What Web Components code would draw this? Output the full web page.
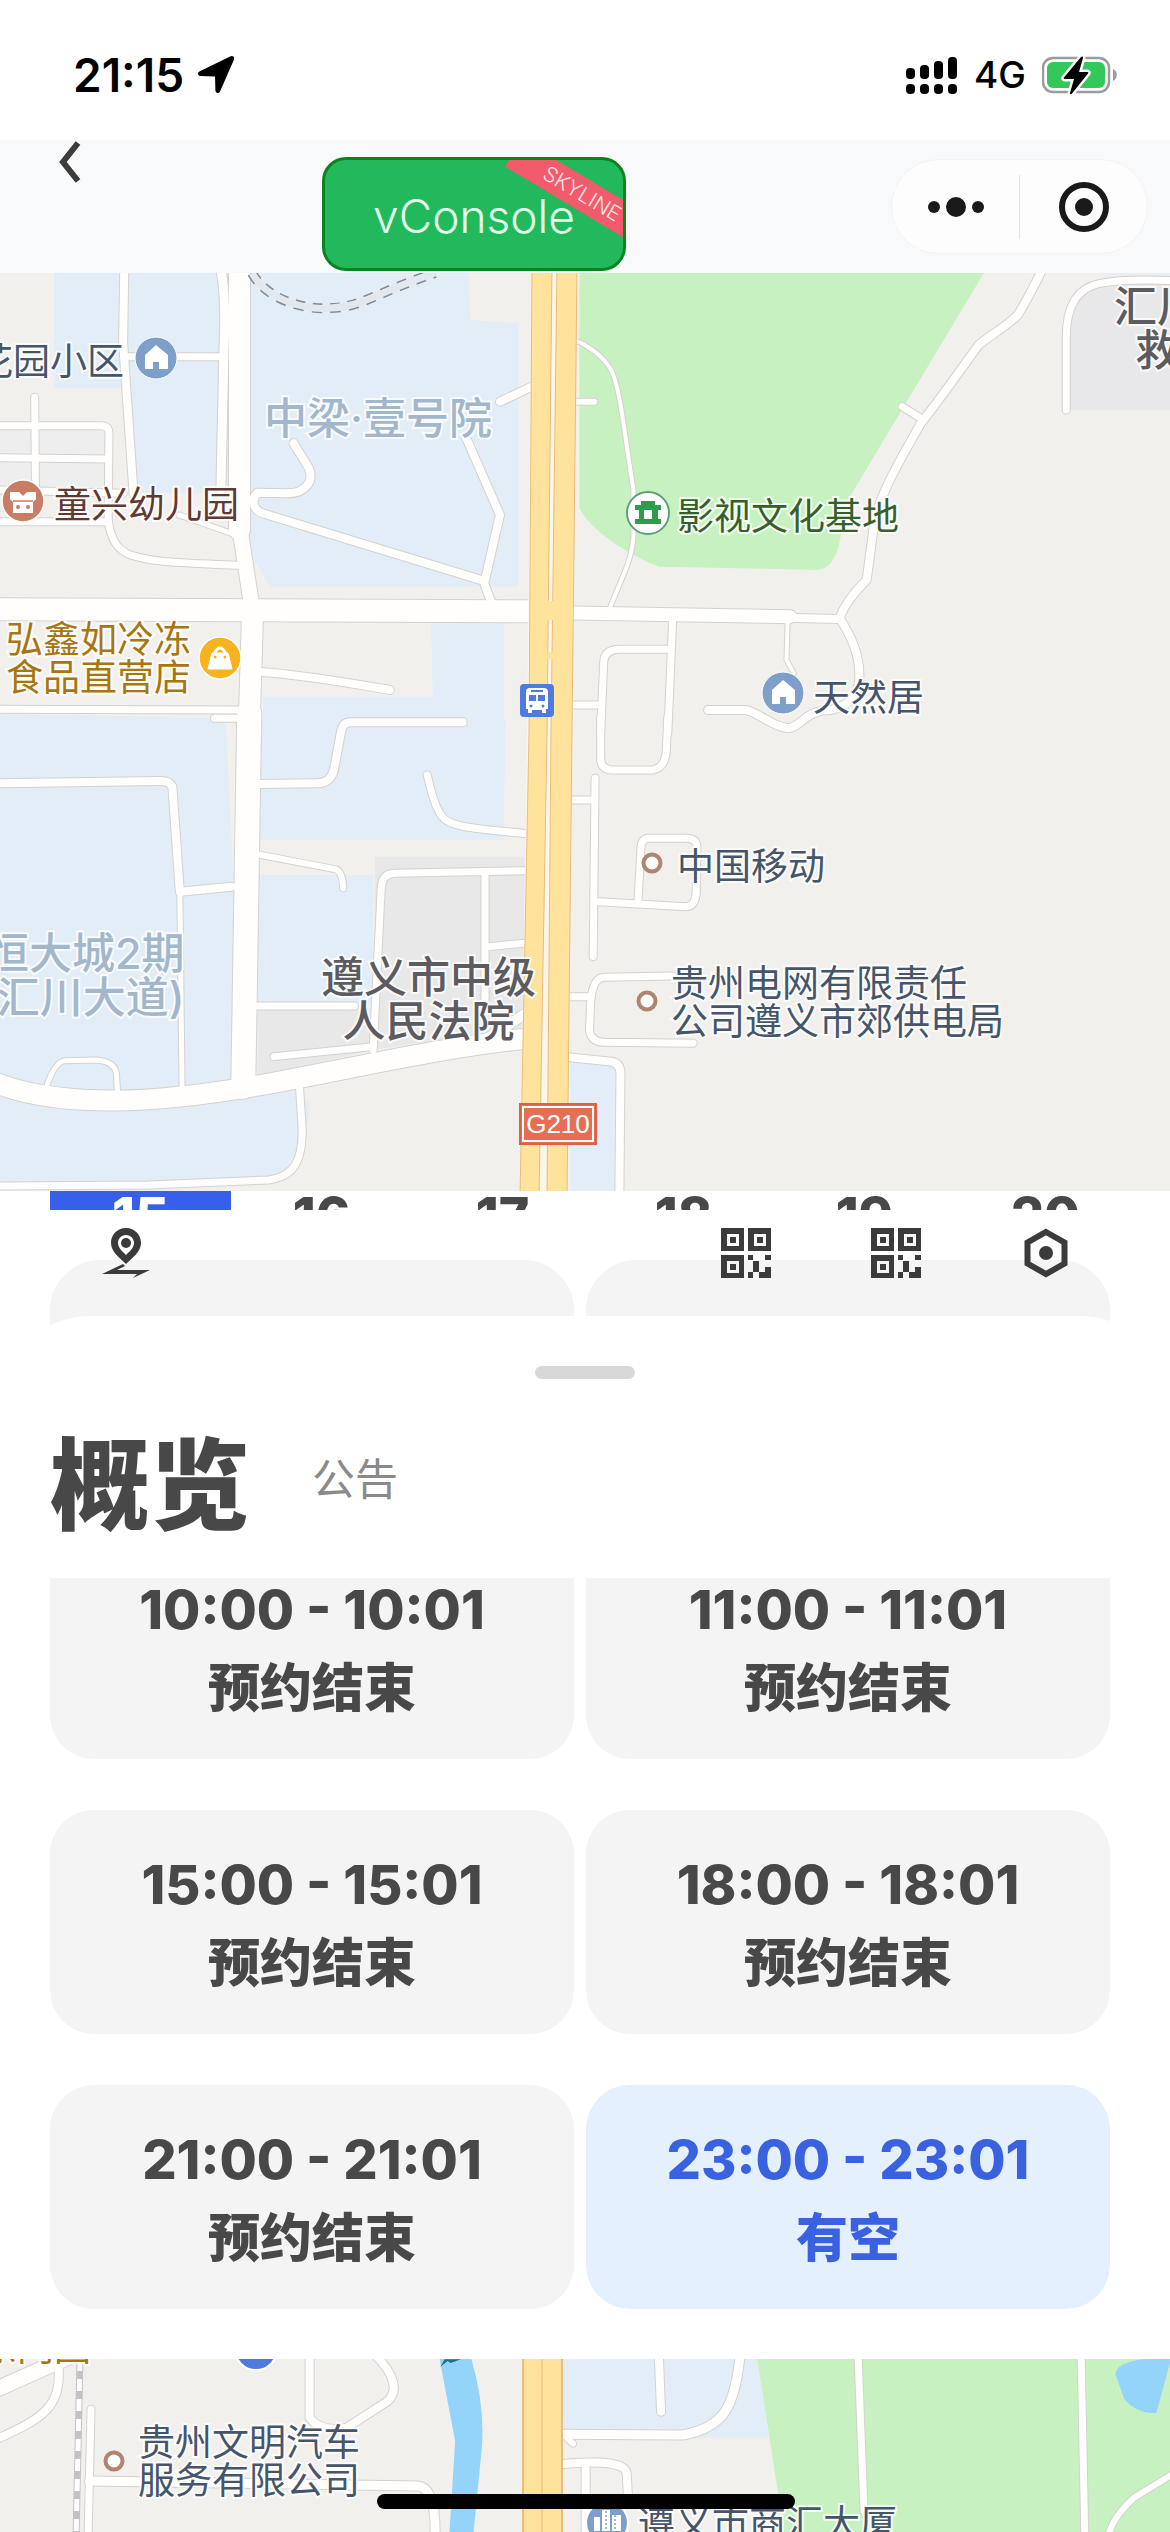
<!DOCTYPE html>
<html lang="zh-CN">
<head>
<meta charset="utf-8">
<meta name="viewport" content="width=device-width, initial-scale=1">
<title>概览</title>
<style>
html, body { margin: 0; background: #fff; }
body { font-family: Inter, "Noto Sans CJK SC", sans-serif; color: #484848; }
booking-page { min-height: 100vh; }
</style>
</head>
<body>
<booking-page>
  <status-bar slot="top" time="21:15" network="4G"></status-bar>
  <nav-bar slot="top"></nav-bar>
  <area-map slot="map" region="north">
    <map-label x="-24" y="89">花园小区</map-label>
    <map-label x="264" y="145" size="large" tone="estate">中梁·壹号院</map-label>
    <map-label x="54" y="232" tone="school">童兴幼儿园</map-label>
    <map-label x="6" y="386" tone="shop">弘鑫如冷冻<br>食品直营店</map-label>
    <map-label x="677" y="244" tone="park">影视文化基地</map-label>
    <map-label x="813" y="425">天然居</map-label>
    <map-label x="1114" y="55" size="large" tone="civic" align="center">汇川<br>救</map-label>
    <map-label x="-14" y="702" size="large" tone="estate" align="right">恒大城2期<br>汇川大道)</map-label>
    <map-label x="321" y="726" size="large" tone="civic" align="center">遵义市中级<br>人民法院</map-label>
    <map-label x="677" y="594">中国移动</map-label>
    <map-label x="671" y="730">贵州电网有限责任<br>公司遵义市郊供电局</map-label>
    <map-label x="519" y="851" tone="route">G210</map-label>
  </area-map>
  <date-strip slot="sheet" days="15,16,17,18,19,20" selected="15"></date-strip>
  <tool-row slot="sheet"></tool-row>
  <overview-panel slot="sheet" heading="概览" link="公告">
    <time-slot time="10:00 - 10:01">预约结束</time-slot>
    <time-slot time="11:00 - 11:01">预约结束</time-slot>
    <time-slot time="15:00 - 15:01">预约结束</time-slot>
    <time-slot time="18:00 - 18:01">预约结束</time-slot>
    <time-slot time="21:00 - 21:01">预约结束</time-slot>
    <time-slot time="23:00 - 23:01" open>有空</time-slot>
  </overview-panel>
  <area-map slot="bottom" region="south">
    <map-label x="-20" y="-11" tone="shop">东门园</map-label>
    <map-label x="138" y="103">贵州文明汽车<br>服务有限公司</map-label>
    <map-label x="638" y="165">遵义市商汇大厦</map-label>
  </area-map>
</booking-page>

<script>
const define = (name, css, html, setup) => {
  const template = document.createElement('template');
  template.innerHTML = `<style>:host,*{box-sizing:border-box}button,a{font:inherit;color:inherit;border:0;background:none;padding:0;margin:0;text-decoration:none}svg{display:block}${css}</style>${typeof html === 'string' ? html : ''}`;
  customElements.define(name, class extends HTMLElement {
    connectedCallback() {
      if (this.shadowRoot) return;
      const root = this.attachShadow({ mode: 'open' });
      root.append(template.content.cloneNode(true));
      if (typeof html === 'function') root.querySelector('style').insertAdjacentHTML('afterend', html(this));
      if (setup) setup(this, root);
    }
  });
};

define('booking-page', `
  :host { display: flex; flex-direction: column; position: relative; overflow: hidden; }
  .bottom { flex: 1; overflow: hidden; min-height: 174px; }
  .home { position: absolute; left: 50%; bottom: 24px; width: 418px; height: 15px; margin-left: -208px; border-radius: 8px; background: #000; }
`, `<slot name="top"></slot><slot name="map"></slot><slot name="sheet"></slot><div class="bottom"><slot name="bottom"></slot></div><div class="home"></div>`);

define('status-bar', `
  :host { display: flex; justify-content: space-between; height: 140px; padding: 50px 52px 40px 73px; color: #000; background: #fff; }
  .side { display: flex; align-items: center; height: 50px; }
  .left { gap: 12px; } .right { gap: 16px; }
  .time { font-size: 46px; font-weight: 600; line-height: 50px; }
  .net { font-size: 37px; font-weight: 500; line-height: 50px; }
`, el => `
  <div class="side left"><span class="time">${el.getAttribute('time')}</span>
    <svg width="38" height="38" viewBox="0 0 38 38"><path d="M36.500 1.200c.9.400.9 1.300.5 2.200L23.200 34.800c-.8 1.900-2.700 1.600-2.800-.3L20 19.500 4.600 19c-2-.1-2.300-2-.4-2.800L34.600 1.300c.7-.3 1.300-.4 1.900-.1z" stroke="#000" stroke-width="2"/></svg></div>
  <div class="side right">
    <svg width="52" height="38" viewBox="0 0 52 38"><g><rect y="12" width="9" height="11" rx="4"/><rect x="14" y="9" width="9" height="14" rx="4"/><rect x="28" y="5" width="9" height="18" rx="4"/><rect x="42" y="1" width="9" height="22" rx="4"/><rect y="28" width="9" height="10" rx="4"/><rect x="14" y="28" width="9" height="10" rx="4"/><rect x="28" y="28" width="9" height="10" rx="4"/><rect x="42" y="28" width="9" height="10" rx="4"/></g></svg>
    <span class="net">${el.getAttribute('network')}</span>
    <svg width="76" height="38" viewBox="0 0 76 38"><rect x="1" y="2" width="66" height="34" rx="10" fill="#fff" stroke="#9b9b9b" stroke-width="2.500"/><rect x="5" y="6" width="58" height="26" rx="6" fill="#34c759"/><path d="M71 13c5 2 5 10 0 12z" fill="#9b9b9b"/><path d="M39 1 22 21.500c-.6.8-.2 1.500.8 1.500H32l-4 14c-.3 1.500 1 1.500 2 .5L46 17.500c.7-.9.300-1.500-.8-1.500H37l4-14c.300-1.500-1-2-2-1z" stroke="#fff" stroke-width="5" paint-order="stroke"/></svg>
  </div>`);

define('nav-bar', `
  :host { display: grid; grid-template-columns: 322px 304px 1fr 257px; height: 133px; padding: 0 22px 0 0; background: #f8f9fb; }
  .back { justify-self: start; align-self: start; margin: 0 0 0 56px; width: 48px; height: 44px; }
  .console { position: relative; overflow: hidden; width: 304px; height: 114px; margin-top: 17px; padding-top: 4px; border: 3px solid #0b8420; border-radius: 24px; background: #22b95c; color: #e2ffec; font-size: 46px; line-height: 50px; font-weight: 300; }
  .ribbon { position: absolute; left: 177px; top: 18px; width: 160px; height: 32px; font-size: 21px; line-height: 32px; background: #f15b6c; color: #ffe3e6; transform: rotate(31deg); }
  .capsule { grid-column: 4; display: flex; align-items: center; height: 95px; margin-top: 19px; border: 1px solid #f2f3f5; border-radius: 48px; background: #fdfdfe; }
  .capsule button { flex: 1; display: flex; justify-content: center; align-items: center; height: 64px; }
  .capsule button + button { border-left: 1px solid #e2e3e5; }
`, `
  <button class="back" aria-label="返回"><svg width="48" height="44" viewBox="0 0 48 44"><path d="M22 3 7 22l15 19" fill="none" stroke="#3c3c3c" stroke-width="6"/></svg></button>
  <button class="console">vConsole<span class="ribbon">SKYLINE</span></button>
  <div class="capsule">
    <button aria-label="更多"><svg width="56" height="20" viewBox="0 0 56 20"><circle cx="6" cy="10" r="6" fill="#1a1a1c"/><circle cx="28" cy="10" r="10" fill="#1a1a1c"/><circle cx="50" cy="10" r="6" fill="#1a1a1c"/></svg></button>
    <button aria-label="关闭"><svg width="52" height="52" viewBox="0 0 52 52"><circle cx="26" cy="26" r="22" fill="none" stroke="#1a1a1c" stroke-width="6"/><circle cx="26" cy="26" r="9" fill="#1a1a1c"/></svg></button>
  </div>`);

/* Roads are grouped by survey tile; each tile has its own origin and scale. [width, path] */
const REGIONS = {
  north: {
    width: 1170, height: 918,
    tiles: { a: 'translate(0 -13) scale(.3731 .3333)', b: 'translate(585 -13) scale(.3731 .3333)', c: 'translate(0 447) scale(.3731 .3333)', d: 'translate(585 447) scale(.3731 .3333)' },
    areas: {
      a: [['#e2edf7', 'M145 0H1255L1260 180 1390 190V980H725L670 880V700H350L330 385H145z'], ['#e2edf7', 'M1155 1090H1350V1440H705V1310H1160z'], ['#e2edf7', 'M0 1362 600 1375V1410H0z'], ['#ecebf0', 'M0 500 290 500V700H0z', .35]],
      b: [['#c8f1c2', 'M-15 0H1090L710 710 685 830Q670 930 620 930L200 920C120 890 0 800-15 740z'], ['#e8e8ea', 'M1290 180Q1290 60 1400 60L1568 60V450H1290z'], ['#ededee', 'M1390 0H1568V60H1390z']],
      c: [['#e2edf7', 'M0 0H605L625 460V1120Q480 1140 300 1130 120 1130 0 1080z'], ['#e2edf7', 'M695 0H1355L1350 360H695z'], ['#e2edf7', 'M690 465H1000V850H690z'], ['#e2edf7', 'M0 1120Q320 1200 800 1100L830 1150Q820 1340 740 1380L400 1395 0 1400z'], ['#e8e8e9', 'M1005 410H1410L1400 920 1000 990z'], ['#e8e8e9', 'M690 865H1000V990L690 1070z']],
      d: [['#e2edf7', 'M-40 1010 95 1030 92 1440H-40z']]
    },
    roads: {
      a: [[8, 'M333 30 330 250 358 700'], [9, 'M592 30C606 100 603 200 600 280L592 690'], [7, 'M345 290H600'], [7, 'M93 412 95 680M0 497H270Q292 497 292 520L290 780C295 830 310 870 350 885 420 910 500 908 635 916'], [7, 'M0 593 290 597M0 690 330 700M0 785H290'], [5, 'M480 765 620 820'], [8, 'M787 550 820 610C850 660 820 700 770 700L690 698C670 720 680 755 710 762L1295 962 1318 1030'], [8, 'M1435 375 1340 425M1248 530 1340 765 1300 960'], [8, 'M690 1235C820 1245 940 1270 1045 1290'], [7, 'M0 1348 650 1350M575 1375H650'], [15, 'M642 800 675 1040'], [21, 'M642 20 642 810'], [22, 'M-20 1048 1440 1054'], [21, 'M677 1060 667 1420']],
      b: [[6, 'M-45 425H25'], [4, 'M-60 235C0 240 50 290 70 330 95 380 110 560 130 690V830Q125 890 105 940L68 1040'], [8, 'M1225 30Q1190 110 1160 165C1130 200 1080 230 1055 255 1000 340 950 420 900 490 850 590 790 700 775 790L755 960Q700 1020 682 1075 740 1170 735 1260 730 1330 660 1350C590 1350 580 1400 545 1405 500 1400 470 1360 430 1350H330'], [7, 'M850 440 900 475'], [7, 'M1290 450V230Q1290 90 1380 70 1450 55 1580 62'], [7, 'M235 1080 222 1420M222 1168H90Q50 1170 50 1210L42 1420M-60 1335H40'], [4, 'M543 1085 540 1200 560 1240'], [8, 'M540 1073 680 1077'], [13, 'M-70 1058 550 1070']],
      c: [[8, 'M1240 7H940Q920 7 915 30L895 150Q885 190 850 190L690 192'], [8, 'M0 190 430 183Q455 183 462 200L482 515 620 500'], [5, 'M482 515 488 1110'], [6, 'M690 403 900 448Q918 455 920 505'], [7, 'M1145 165C1155 210 1165 260 1185 290 1205 320 1260 325 1420 342'], [7, 'M1000 990 1022 500Q1025 460 1060 460L1420 452M1300 460V850M1310 680 1420 668'], [7, 'M680 858H950M735 1010 1000 980'], [5, 'M122 1110Q145 1025 175 1022L250 1020Q305 1020 312 1060L315 1115'], [7, 'M803 1105 810 1230C810 1320 790 1370 720 1380L400 1395 0 1398'], [10, 'M1300 960 1410 880'], [24, 'M668-20 652 1100'], [20, 'M-20 1085C120 1150 320 1150 480 1130 760 1100 1100 990 1420 955']],
      d: [[7, 'M42-10V120Q45 150 75 150H180Q215 145 218 90L222-10'], [7, 'M27 175 22 710M-50 240H20'], [7, 'M35 545 270 560Q295 560 298 520L300 380Q300 355 270 355H170Q150 358 150 385L142 545'], [7, 'M235 768 50 772Q20 775 15 850L12 930Q15 965 50 967L290 970M-60 830H15'], [8, 'M-60 1010 70 1025Q95 1030 95 1060L92 1440']]
    },
    overlay: `
      <path d="M252 0C269 30 310 37 330 35 360 35 375 20 435 0" fill="none" stroke="#838a94" stroke-width="10" stroke-dasharray="10 8"/>
      <path d="M252 0C269 30 310 37 330 35 360 35 375 20 435 0" fill="none" stroke="#e3e8ee" stroke-width="7"/>
      <path d="M532-5 577-5 572 460 567 925 520 925 527 460z" fill="#fbf6ea"/>
      <path d="M532-5 529 460 520 925 539 925 547 460 552-5z M557-5 551 460 547 925 567 925 572 460 577-5z" fill="#ffe39d" stroke="#e9bb7c" stroke-width="1"/>
      <path d="M531 328H573V347H531z" fill="#ffe39d"/><path d="M548 379H554V386H547z" fill="#ffe39d"/>
      <use href="#house" x="135" y="64"/><use href="#house" x="762" y="399"/>
      <circle cx="23" cy="228" r="21" fill="#c97d64" stroke="#fff" stroke-width="1.500"/><path d="M10 219h9l4 4 4-4h9v7l-3 3v11H13v-11l-3-3z" fill="#fff"/><path d="M13 228h20" stroke="#c97d64" stroke-width="1.500"/><circle cx="18" cy="234" r="2" fill="#c97d64"/><circle cx="28" cy="234" r="2" fill="#c97d64"/>
      <circle cx="220" cy="385" r="21" fill="#f6b31f" stroke="#fff" stroke-width="1.500"/><path d="M212 380h16l4 16h-24z" fill="#fff" stroke="#fff" stroke-linejoin="round"/><path d="M215 381v-2q5-8 10 0v2" fill="none" stroke="#fff" stroke-width="3"/><circle cx="215" cy="384" r="1.500" fill="#f6b31f"/><circle cx="225" cy="384" r="1.500" fill="#f6b31f"/>
      <rect x="520" y="411" width="34" height="33" rx="4" fill="#4d7be0"/><path d="M526 419q0-4 4-4h14q4 0 4 4v17h-2v4h-4v-3h-10v3h-4v-4h-2zM529 422v6h7v-6zM538 422v6h7v-6zM531 417v2h12v-2z" fill="#fff" fill-rule="evenodd"/><circle cx="531" cy="433" r="1.500" fill="#4d7be0"/><circle cx="543" cy="433" r="1.500" fill="#4d7be0"/>
      <circle cx="648" cy="240" r="21" fill="#fff" stroke="#5f9f78" stroke-width="2"/><path d="M641 228h14v4h6v5h-3v9h3v5h-26v-5h4v-9h-4v-5h6zM644 237v9h8v-9z" fill="#2f9c4c" fill-rule="evenodd"/>
      <use href="#ring" x="652" y="590"/><use href="#ring" x="647" y="728"/>`
  },
  south: {
    width: 1170, height: 174,
    tiles: { e: 'translate(0 -18) scale(.7461 .3333)' },
    areas: { e: [['#94d4fb', 'M588 40 630 40Q652 200 645 340L634 590H602L610 300z'], ['#e2edf7', 'M755 40H1018L1030 290H755z'], ['#c8f1c2', 'M1014 40H1580V590H1052z'], ['#94d4fb', 'M1495 100Q1496 50 1570 50L1550 215Q1525 222 1507 175z'], ['#1f6f8c', 'M590 78 596 55H618L604 66 600 60z']] },
    roads: { e: [[8, 'M78 60C84 200 60 230-10 300'], [7, 'M122 205 118 590'], [9, 'M120 420 560 435Q585 440 583 590'], [8, 'M415 40V230Q430 275 465 260L520 180Q542 130 502 40'], [8, 'M883 40 886 212'], [9, 'M750 280 915 282C970 260 985 200 992 40'], [8, 'M750 370Q840 350 840 400L842 480M785 370V590'], [6, 'M755 280 768 308'], [7, 'M1150 40 1158 510'], [7, 'M1449 40 1454 590'], [6, 'M1575 395 1520 470Q1490 530 1485 590'], [15, 'M-20 160 100 40']] },
    overlay: `
      <path d="M80 0 76 180" stroke="#c3c3c3" stroke-width="7"/><path d="M80 0 76 180" stroke="#fff" stroke-width="5" stroke-dasharray="12 8"/>
      <path d="M523-5H562V180H523z" fill="#ffe39d" stroke="#e9bb7c" stroke-width="2"/><path d="M542-5V180" stroke="#e9bb7c" stroke-width="1"/>
      <circle cx="256" cy="-10" r="21" fill="#4d7be0" stroke="#fff" stroke-width="2"/>
      <use href="#ring" x="114" y="102"/>
      <circle cx="607" cy="164" r="21" fill="#7d9fca" stroke="#fff" stroke-width="2"/><path d="M594 158h6v14h-6zM602 151h8v21h-8zM612 156h9v16h-9z" fill="#fff"/><path d="M615 156v16M606 152v20" stroke="#7d9fca" stroke-width="1.500" stroke-dasharray="2 2"/>`
  }
};

define('area-map', `
  :host { display: block; position: relative; overflow: hidden; background: #f2f0ed; }
  svg { width: 100%; height: auto; }
  .casing, .lane { fill: none; stroke-linecap: round; stroke-linejoin: round; vector-effect: non-scaling-stroke; }
  .casing { stroke: #d3d2cf; } .lane { stroke: #fffefc; }
`, el => {
  const r = REGIONS[el.getAttribute('region')];
  const each = (set, draw) => Object.entries(set).map(([tile, items]) => `<g transform="${r.tiles[tile]}">${items.map(draw).join('')}</g>`).join('');
  return `<svg viewBox="0 0 ${r.width} ${r.height}" aria-hidden="true"><defs>
    <g id="house"><circle cx="21" cy="21" r="21" fill="#7d9fca" stroke="#fff" stroke-width="1"/><path d="M21 8 33 18V32H24V25H18V32H10V18z" fill="#fff"/></g>
    <circle id="ring" r="8.500" fill="#fff" stroke="#ad8570" stroke-width="4"/></defs>
    ${each(r.areas, a => `<path fill="${a[0]}" opacity="${a[2] || 1}" d="${a[1]}"/>`)}
    ${each(r.roads, p => `<path class="casing" stroke-width="${p[0] + 2}" d="${p[1]}"/>`)}
    ${each(r.roads, p => `<path class="lane" stroke-width="${p[0]}" d="${p[1]}"/>`)}
    ${r.overlay}</svg><slot></slot>`;
}, el => {
  const r = REGIONS[el.getAttribute('region')];
  for (const label of el.children) {
    label.style.left = label.getAttribute('x') / r.width * 100 + '%';
    label.style.top = label.getAttribute('y') / r.height * 100 + '%';
  }
});

define('map-label', `
  :host { position: absolute; transform: translateY(-50%); white-space: nowrap; font: 400 37px/38px Inter, "Noto Sans CJK SC", sans-serif; color: #45566a; -webkit-text-stroke: 4px #fffc; paint-order: stroke fill; }
  :host([size=large]) { font-size: 43px; line-height: 44px; font-weight: 500; }
  :host([align=center]) { text-align: center; } :host([align=right]) { text-align: right; }
  :host([tone=estate]) { color: #a3b7cb; } :host([tone=school]) { color: #5f3a32; } :host([tone=shop]) { color: #a8760f; }
  :host([tone=park]) { color: #36602a; } :host([tone=civic]) { color: #5c5c60; }
  :host([tone=route]) { width: 78px; height: 42px; border: 2px solid #dc6048; outline: 2px solid #fff; outline-offset: -5px; background: #e56e54; color: #fff; font: 400 26px/38px "Liberation Sans", sans-serif; text-align: center; -webkit-text-stroke: 0; }
`, `<slot></slot>`);

define('date-strip', `
  :host { display: flex; height: 19px; overflow: hidden; padding: 0 34px 0 50px; background: #fff; }
  button { flex: 1; height: 110px; padding-bottom: 58px; font-size: 52px; line-height: 52px; font-weight: 800; }
  .on { background: #375fe9; color: #fff; }
`, el => el.getAttribute('days').split(',').map(d => `<button${d === el.getAttribute('selected') ? ' class="on"' : ''}>${d}</button>`).join(''));

define('tool-row', `
  :host { display: grid; height: 106px; background: #fff; }
  .cards, .tools { grid-area: 1 / 1; }
  .cards { display: grid; grid-template-columns: 1fr 1fr; gap: 12px; padding: 50px 60px 0 50px; height: 130px; }
  .cards i { border-radius: 50px 50px 0 0; background: #f4f4f4; }
  .tools { display: flex; gap: 100px; padding: 18px 99px 0 100px; }
  .tools button { height: 50px; width: 50px; }
  .tools button:first-child { margin-right: auto; }
`, () => {
  const eye = (x, y) => `<path d="M${x} ${y}h23v23h-23zM${x + 6} ${y + 6}v12h12v-12z" fill-rule="evenodd"/><path d="M${x + 9} ${y + 9}h6v6h-6z"/>`;
  const qr = `<svg width="50" height="50" viewBox="0 0 50 50" fill="#3b3b3b">${eye(0, 0)}${eye(27, 0)}${eye(0, 27)}<path d="M27 27h5v5h-5zM44 27h6v5h-6zM32 33h6v11h-6zM44 39h6v11h-12v-6h6zM27 44h5v6h-5z"/></svg>`;
  return `<div class="cards"><i></i><i></i></div><div class="tools">
    <button aria-label="定位"><svg width="50" height="50" viewBox="0 0 50 50" fill="#3b3b3b"><path d="M26 0c9 0 15 7 15 15 0 9-9 15-15 21C20 30 11 24 11 15 11 7 17 0 26 0zM26 7c-5 0-8 4-8 8 0 5 5 9 8 12 3-3 8-7 8-12 0-4-3-8-8-8z" fill-rule="evenodd"/><circle cx="26" cy="15" r="5"/><path d="M23 36 2 46H37L33 50 50 42H17L25 38z"/></svg></button>
    <button aria-label="二维码">${qr}</button><button aria-label="扫码">${qr}</button>
    <button aria-label="设置"><svg width="50" height="50" viewBox="0 0 50 50"><path d="M25 4 43.500 14.500V35.500L25 46 6.500 35.500V14.500z" fill="none" stroke="#3b3b3b" stroke-width="6"/><circle cx="25" cy="25" r="7" fill="#3b3b3b"/></svg></button></div>`;
});

define('overview-panel', `
  :host { display: block; position: relative; border-radius: 90px 90px 0 0; background: #fff; padding: 50px 0; }
  .grip { width: 100px; height: 13px; margin: 0 auto; border-radius: 7px; background: #d8d8d8; }
  header { display: flex; align-items: center; gap: 62px; height: 199px; padding: 0 50px; }
  h1 { margin: 0; font: 900 100px/120px "Noto Sans CJK SC", sans-serif; color: #484848; }
  a { font-size: 43px; line-height: 50px; font-weight: 400; color: #8a8a8a; }
  .list { overflow: hidden; display: flex; flex-direction: column; justify-content: flex-end; height: 731px; padding: 0 60px 0 50px; }
  .grid { display: grid; grid-template-columns: 1fr 1fr; gap: 51px 12px; }
`, el => `<div class="grip"></div><header><h1>${el.getAttribute('heading')}</h1><a href="#">${el.getAttribute('link')}</a></header><div class="list"><div class="grid"><slot></slot></div></div>`);

define('time-slot', `
  :host { display: block; color: #484848; --fill: #f4f4f4; }
  :host([open]) { color: #3a62e0; --fill: #e4f0fe; }
  button { display: flex; flex-direction: column; align-items: center; justify-content: center; width: 100%; height: 224px; border-radius: 44px; background: var(--fill); }
  .time { font-size: 54px; line-height: 75px; font-weight: 800; }
  .state { font: 900 52px/75px "Noto Sans CJK SC", sans-serif; }
`, el => `<button><span class="time">${el.getAttribute('time')}</span><span class="state"><slot></slot></span></button>`);
</script>
</body>
</html>
